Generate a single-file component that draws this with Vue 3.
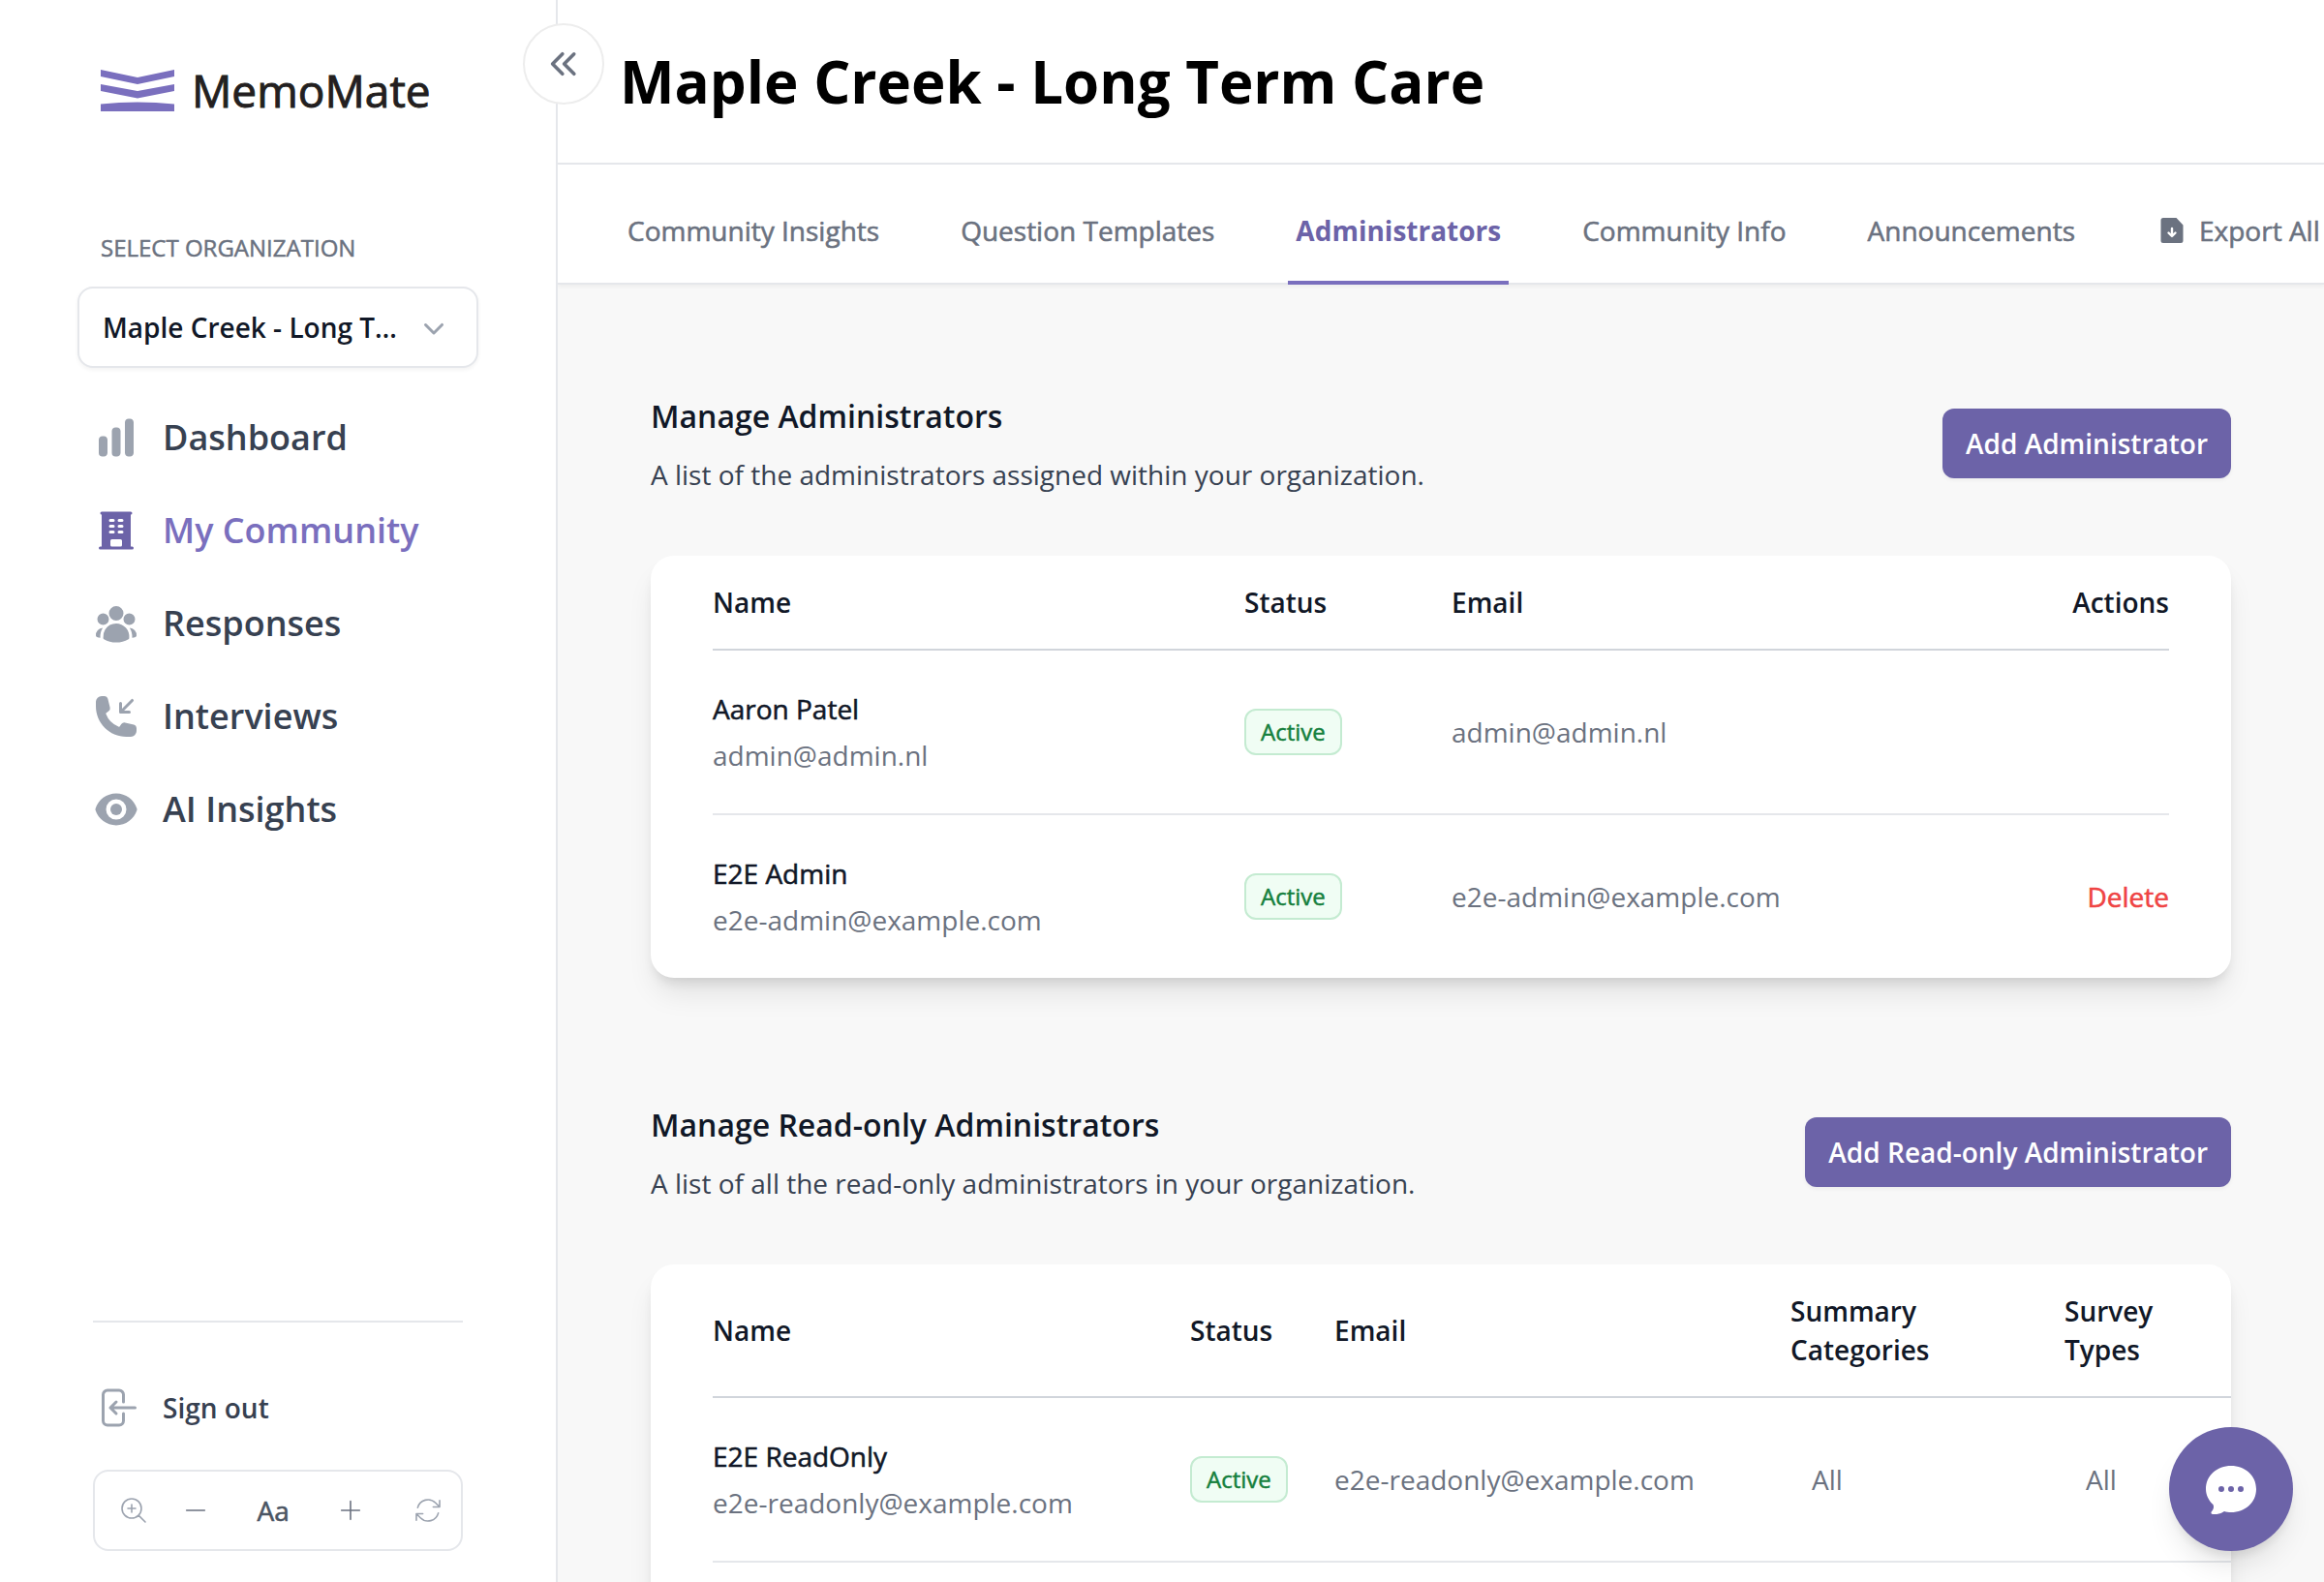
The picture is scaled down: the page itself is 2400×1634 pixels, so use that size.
<script setup>
import { ref } from 'vue'

const organization = ref('maple-creek')

const navItems = [
  {
    label: 'Dashboard',
    paths: [
      'M18.375 2.25c-1.035 0-1.875.84-1.875 1.875v15.75c0 1.035.84 1.875 1.875 1.875h.75c1.035 0 1.875-.84 1.875-1.875V4.125c0-1.036-.84-1.875-1.875-1.875h-.75ZM9.75 8.625c0-1.036.84-1.875 1.875-1.875h.75c1.036 0 1.875.84 1.875 1.875v11.25c0 1.035-.84 1.875-1.875 1.875h-.75a1.875 1.875 0 0 1-1.875-1.875V8.625ZM3 13.125c0-1.036.84-1.875 1.875-1.875h.75c1.036 0 1.875.84 1.875 1.875v6.75c0 1.035-.84 1.875-1.875 1.875h-.75A1.875 1.875 0 0 1 3 19.875v-6.75Z',
    ],
  },
  {
    label: 'My Community',
    active: true,
    paths: [
      'M4.5 2.25a.75.75 0 0 0 0 1.5v16.5h-.75a.75.75 0 0 0 0 1.5h16.5a.75.75 0 0 0 0-1.5h-.75V3.75a.75.75 0 0 0 0-1.5h-15ZM9 6a.75.75 0 0 0 0 1.5h1.5a.75.75 0 0 0 0-1.5H9Zm-.75 3.75A.75.75 0 0 1 9 9h1.5a.75.75 0 0 1 0 1.5H9a.75.75 0 0 1-.75-.75ZM9 12a.75.75 0 0 0 0 1.5h1.5a.75.75 0 0 0 0-1.5H9Zm3.75-5.25A.75.75 0 0 1 13.5 6H15a.75.75 0 0 1 0 1.5h-1.5a.75.75 0 0 1-.75-.75ZM13.5 9a.75.75 0 0 0 0 1.5H15A.75.75 0 0 0 15 9h-1.5Zm-.75 3.75a.75.75 0 0 1 .75-.75H15a.75.75 0 0 1 0 1.5h-1.5a.75.75 0 0 1-.75-.75ZM9 19.5v-2.25a.75.75 0 0 1 .75-.75h4.5a.75.75 0 0 1 .75.75v2.25a.75.75 0 0 1-.75.75h-4.5A.75.75 0 0 1 9 19.5Z',
    ],
  },
  {
    label: 'Responses',
    paths: [
      'M8.25 6.75a3.75 3.75 0 1 1 7.5 0 3.75 3.75 0 0 1-7.5 0ZM15.75 9.75a3 3 0 1 1 6 0 3 3 0 0 1-6 0ZM2.25 9.75a3 3 0 1 1 6 0 3 3 0 0 1-6 0ZM6.31 15.117A6.745 6.745 0 0 1 12 12a6.745 6.745 0 0 1 6.709 7.498.75.75 0 0 1-.372.568A12.696 12.696 0 0 1 12 21.75c-2.305 0-4.47-.612-6.337-1.684a.75.75 0 0 1-.372-.568 6.787 6.787 0 0 1 1.019-4.38Z',
      'M5.082 14.254a8.287 8.287 0 0 0-1.308 5.135 9.687 9.687 0 0 1-1.764-.44l-.115-.04a.563.563 0 0 1-.373-.487l-.01-.121a3.75 3.75 0 0 1 3.57-4.047ZM20.226 19.389a8.287 8.287 0 0 0-1.308-5.135 3.75 3.75 0 0 1 3.57 4.047l-.01.121a.563.563 0 0 1-.373.486l-.115.04c-.567.2-1.156.349-1.764.441Z',
    ],
  },
  {
    label: 'Interviews',
    paths: [
      'M19.5 9.75a.75.75 0 0 1-.75.75h-4.5a.75.75 0 0 1-.75-.75v-4.5a.75.75 0 0 1 1.5 0v2.69l4.72-4.72a.75.75 0 1 1 1.06 1.06L16.06 9h2.69a.75.75 0 0 1 .75.75Z',
      'M1.5 4.5a3 3 0 0 1 3-3h1.372c.86 0 1.61.586 1.819 1.42l1.105 4.423a1.875 1.875 0 0 1-.694 1.955l-1.293.97c-.135.101-.164.249-.126.352a11.285 11.285 0 0 0 6.697 6.697c.103.038.25.009.352-.126l.97-1.293a1.875 1.875 0 0 1 1.955-.694l4.423 1.105c.834.209 1.42.959 1.42 1.82V19.5a3 3 0 0 1-3 3h-2.25C8.552 22.5 1.5 15.448 1.5 6.75V4.5Z',
    ],
  },
  {
    label: 'AI Insights',
    paths: [
      'M12 15a3 3 0 1 0 0-6 3 3 0 0 0 0 6Z',
      'M1.323 11.447C2.811 6.976 7.028 3.75 12.001 3.75c4.97 0 9.185 3.223 10.675 7.69.12.362.12.752 0 1.113-1.487 4.471-5.705 7.697-10.677 7.697-4.97 0-9.186-3.223-10.675-7.69a1.762 1.762 0 0 1 0-1.113ZM17.25 12a5.25 5.25 0 1 1-10.5 0 5.25 5.25 0 0 1 10.5 0Z',
    ],
  },
]

const tabs = [
  { label: 'Community Insights' },
  { label: 'Question Templates' },
  { label: 'Administrators', active: true },
  { label: 'Community Info' },
  { label: 'Announcements' },
  { label: 'Export All', icon: true },
]

const admins = [
  { name: 'Aaron Patel', email: 'admin@admin.nl', status: 'Active', removable: false },
  { name: 'E2E Admin', email: 'e2e-admin@example.com', status: 'Active', removable: true },
]

const readOnlyAdmins = [
  { name: 'E2E ReadOnly', email: 'e2e-readonly@example.com', status: 'Active', categories: 'All', surveys: 'All' },
]
</script>

<template>
  <div class="shell">
    <aside class="sidebar">
      <a href="#" class="brand medium">
        <svg class="brand-mark" viewBox="0 0 76 43" aria-hidden="true">
          <path d="M0 0 38 8 76 0V7L38 15 0 7ZM0 15 38 22 76 15V22L38 29.500 0 22ZM0 35.500Q38 31.500 76 35.500V43H0Z" />
        </svg>
        <span>MemoMate</span>
      </a>

      <label class="org-label medium" for="organization">SELECT ORGANIZATION</label>
      <div class="org-field">
        <select id="organization" v-model="organization" class="org-select">
          <option value="maple-creek">Maple Creek - Long Term Care</option>
        </select>
        <svg class="org-chevron" viewBox="0 0 20 20" aria-hidden="true">
          <path d="M5.22 8.22a.75.75 0 0 1 1.06 0L10 11.94l3.72-3.72a.75.75 0 1 1 1.06 1.06l-4.25 4.25a.75.75 0 0 1-1.06 0L5.22 9.28a.75.75 0 0 1 0-1.06Z" />
        </svg>
      </div>

      <nav class="nav" aria-label="Main">
        <a v-for="item in navItems" :key="item.label" href="#" class="nav-link" :class="{ active: item.active }">
          <svg class="nav-icon" viewBox="0 0 24 24" fill-rule="evenodd" aria-hidden="true">
            <path v-for="d in item.paths" :key="d" :d="d" />
          </svg>
          <span>{{ item.label }}</span>
        </a>
      </nav>

      <div class="sidebar-foot">
        <a href="#" class="sign-out">
          <svg class="line-icon" viewBox="0 0 24 24" aria-hidden="true">
            <path d="M15.75 9V5.25A2.25 2.25 0 0 0 13.5 3h-6a2.25 2.25 0 0 0-2.25 2.25v13.5A2.25 2.25 0 0 0 7.5 21h6a2.25 2.25 0 0 0 2.25-2.25V15M12 9l-3 3m0 0 3 3m-3-3h12.75" />
          </svg>
          <span>Sign out</span>
        </a>

        <div class="text-size medium">
          <svg class="size-icon" viewBox="0 0 24 24" aria-hidden="true">
            <path d="m21 21-5.197-5.197m0 0A7.5 7.5 0 1 0 5.196 5.196a7.5 7.5 0 0 0 10.607 10.607ZM10.500 7.500v6m3-3h-6" />
          </svg>
          <div class="size-controls">
            <button type="button" class="size-button dark" aria-label="Decrease text size">
              <svg class="size-icon" viewBox="0 0 24 24" aria-hidden="true"><path d="M5 12h14" /></svg>
            </button>
            <span>Aa</span>
            <button type="button" class="size-button dark" aria-label="Increase text size">
              <svg class="size-icon" viewBox="0 0 24 24" aria-hidden="true"><path d="M12 5v14m7-7H5" /></svg>
            </button>
            <button type="button" class="size-button" aria-label="Reset text size">
              <svg class="size-icon" viewBox="0 0 24 24" aria-hidden="true">
                <path d="M16.023 9.348h4.992v-.001M2.985 19.644v-4.992m0 0h4.992m-4.993 0 3.181 3.183a8.250 8.250 0 0 0 13.803-3.700M4.031 9.865a8.250 8.250 0 0 1 13.803-3.700l3.181 3.182m0-4.991v4.990" />
              </svg>
            </button>
          </div>
        </div>
      </div>

      <button type="button" class="collapse" aria-label="Collapse sidebar">
        <svg viewBox="0 0 20 20" aria-hidden="true">
          <path d="M4.720 9.470a.75.75 0 0 0 0 1.060l4.250 4.250a.75.75 0 1 0 1.060-1.060L6.310 10l3.720-3.720a.75.75 0 1 0-1.060-1.060L4.720 9.470Zm9.250-4.250L9.720 9.470a.75.75 0 0 0 0 1.060l4.250 4.250a.75.75 0 1 0 1.060-1.060L11.310 10l3.720-3.720a.75.75 0 0 0-1.060-1.060Z" />
        </svg>
      </button>
    </aside>

    <div class="page">
      <header class="page-header">
        <h1>Maple Creek - Long Term Care</h1>
      </header>

      <nav class="tabs" aria-label="Community">
        <a v-for="tab in tabs" :key="tab.label" href="#" class="tab" :class="tab.active ? 'active' : 'medium'">
          <svg v-if="tab.icon" class="tab-icon" viewBox="0 0 32 32" aria-hidden="true">
            <path d="M7 3H20.500L27.500 10.500V26.500A2.500 2.500 0 0 1 25 29H7A2.500 2.500 0 0 1 4.500 26.500V5.500A2.500 2.500 0 0 1 7 3Z" />
            <path class="tab-arrow" d="M16 14V21.800M12.500 18.500 16 22 19.500 18.500" />
          </svg>
          <span>{{ tab.label }}</span>
        </a>
      </nav>

      <main class="content">
        <section class="section">
          <div class="section-head">
            <div>
              <h2>Manage Administrators</h2>
              <p>A list of the administrators assigned within your organization.</p>
            </div>
            <button type="button" class="primary">Add Administrator</button>
          </div>
          <div class="card">
            <table class="data">
              <colgroup>
                <col class="admin-name" />
                <col class="admin-status" />
                <col />
                <col class="admin-actions" />
              </colgroup>
              <thead>
                <tr>
                  <th scope="col">Name</th>
                  <th scope="col">Status</th>
                  <th scope="col">Email</th>
                  <th scope="col" class="actions">Actions</th>
                </tr>
              </thead>
              <tbody>
                <tr v-for="admin in admins" :key="admin.email">
                  <td>
                    <div class="person medium">{{ admin.name }}</div>
                    <div class="person-email">{{ admin.email }}</div>
                  </td>
                  <td><span class="badge medium">{{ admin.status }}</span></td>
                  <td>{{ admin.email }}</td>
                  <td class="actions">
                    <button v-if="admin.removable" type="button" class="delete medium">Delete</button>
                  </td>
                </tr>
              </tbody>
            </table>
          </div>
        </section>

        <section class="section">
          <div class="section-head">
            <div>
              <h2>Manage Read-only Administrators</h2>
              <p>A list of all the read-only administrators in your organization.</p>
            </div>
            <button type="button" class="primary">Add Read-only Administrator</button>
          </div>
          <div class="card">
            <table class="data wide">
              <colgroup>
                <col class="reader-name" />
                <col class="reader-status" />
                <col class="reader-email" />
                <col class="reader-scope" />
                <col />
              </colgroup>
              <thead>
                <tr>
                  <th scope="col">Name</th>
                  <th scope="col">Status</th>
                  <th scope="col">Email</th>
                  <th scope="col">Summary<br />Categories</th>
                  <th scope="col">Survey<br />Types</th>
                </tr>
              </thead>
              <tbody>
                <tr v-for="admin in readOnlyAdmins" :key="admin.email">
                  <td>
                    <div class="person medium">{{ admin.name }}</div>
                    <div class="person-email">{{ admin.email }}</div>
                  </td>
                  <td><span class="badge medium">{{ admin.status }}</span></td>
                  <td>{{ admin.email }}</td>
                  <td class="scope">{{ admin.categories }}</td>
                  <td class="scope">{{ admin.surveys }}</td>
                </tr>
              </tbody>
            </table>
          </div>
        </section>
      </main>
    </div>

    <button type="button" class="chat" aria-label="Open chat">
      <svg viewBox="0 0 52 52" aria-hidden="true">
        <path fill-rule="evenodd" d="M26 2C40.500 2 52 12 52 26S40.500 50 26 50C23.500 50 21 49.700 19 49C16 51.500 11 52.500 7 52C5 51.500 5 50 6.500 48.500C8 46.500 8.500 44.500 7.500 42C3 38 0 32 0 26C0 12 11.500 2 26 2ZM16 23a3 3 0 1 0 0 6 3 3 0 0 0 0-6ZM26 23a3 3 0 1 0 0 6 3 3 0 0 0 0-6ZM36 23a3 3 0 1 0 0 6 3 3 0 0 0 0-6Z" />
      </svg>
    </button>
  </div>
</template>

<style>
body {
  margin: 0;
}
</style>

<style scoped>
.shell,
.shell * {
  box-sizing: border-box;
}

.shell {
  display: flex;
  height: 100vh;
  overflow: hidden;
  background: #f8f8f8;
  color: #111827;
  font-family: "Open Sans", "Noto Sans", sans-serif;
  font-size: 28px;
  line-height: 40px;
}

a {
  color: inherit;
  text-decoration: none;
}

button,
select {
  margin: 0;
  padding: 0;
  border: 0;
  background: none;
  color: inherit;
  font: inherit;
  cursor: pointer;
}

svg {
  display: block;
  flex: none;
  fill: currentColor;
}

h1,
h2,
p {
  margin: 0;
}

/* Thickens the regular cut where the family has no medium one */
.medium {
  font-weight: 500;
  -webkit-text-stroke: 0.02em currentColor;
}

.sidebar {
  position: relative;
  z-index: 1;
  display: flex;
  flex: none;
  flex-direction: column;
  width: 576px;
  padding: 62px 80px 32px;
  border-right: 2px solid #e5e7eb;
  background: #fff;
}

.brand {
  display: flex;
  align-items: center;
  gap: 18px;
  height: 62px;
  padding-left: 24px;
  color: #231f20;
  font-size: 46px;
}

.brand-mark {
  width: 76px;
  height: 43px;
  color: #7a6fbe;
}

.org-label {
  margin-top: 112px;
  padding-left: 24px;
  color: #6b7280;
  font-size: 24px;
}

.org-field {
  position: relative;
  margin-top: 20px;
}

.org-select {
  display: block;
  width: 100%;
  height: 84px;
  padding: 0 80px 0 24px;
  overflow: hidden;
  border: 2px solid #e5e7eb;
  border-radius: 16px;
  background: #fff;
  box-shadow: 0 2px 4px rgba(0, 0, 0, 0.05);
  font-weight: 600;
  text-overflow: ellipsis;
  white-space: nowrap;
  appearance: none;
}

.org-chevron {
  position: absolute;
  top: 22px;
  right: 26px;
  width: 40px;
  height: 40px;
  color: #9ca3af;
  pointer-events: none;
}

.nav {
  display: flex;
  flex-direction: column;
  margin-top: 24px;
}

.nav-link {
  display: flex;
  align-items: center;
  gap: 24px;
  height: 96px;
  padding-left: 16px;
  color: #374151;
  font-size: 36px;
  font-weight: 600;
}

.nav-icon {
  width: 48px;
  height: 48px;
  color: #9ca3af;
}

.nav-link.active {
  color: #7a6fbe;
}

.nav-link.active .nav-icon {
  color: #6c63a8;
}

.sidebar-foot {
  margin: auto 16px 0;
  border-top: 2px solid #e5e7eb;
}

.sign-out {
  display: flex;
  align-items: center;
  gap: 24px;
  margin: 64px 0 40px;
  color: #374151;
  font-weight: 600;
}

.line-icon {
  width: 48px;
  height: 48px;
  fill: none;
  stroke: #9ca3af;
  stroke-width: 1.5;
  stroke-linecap: round;
  stroke-linejoin: round;
}

.text-size {
  display: flex;
  align-items: center;
  gap: 32px;
  height: 84px;
  padding: 0 18px 0 24px;
  border: 2px solid #e5e7eb;
  border-radius: 16px;
  color: #4b5563;
}

.size-controls {
  display: flex;
  flex: 1;
  align-items: center;
  justify-content: space-between;
}

.size-icon {
  width: 32px;
  height: 32px;
  fill: none;
  stroke: #9ca3af;
  stroke-width: 1.2;
  stroke-linecap: round;
  stroke-linejoin: round;
}

.dark .size-icon {
  stroke: #6b7280;
}

.collapse {
  position: absolute;
  top: 24px;
  right: -50px;
  display: flex;
  align-items: center;
  justify-content: center;
  width: 84px;
  height: 84px;
  border: 2px solid #ededed;
  border-radius: 50%;
  background: #fff;
  color: #6b7280;
}

.collapse svg {
  width: 48px;
  height: 48px;
}

.page {
  display: flex;
  flex: 1;
  flex-direction: column;
  min-width: 0;
}

.page-header {
  display: flex;
  flex: none;
  align-items: center;
  height: 170px;
  padding: 0 64px;
  border-bottom: 2px solid #e5e7eb;
  background: #fff;
  color: #000;
}

h1 {
  font-size: 60px;
  font-weight: 700;
  line-height: 72px;
}

.tabs {
  display: flex;
  flex: none;
  gap: 68px;
  height: 124px;
  padding: 0 64px;
  border-bottom: 2px solid #e5e7eb;
  background: #fff;
  box-shadow: 0 2px 4px rgba(0, 0, 0, 0.05);
}

.tab {
  display: flex;
  flex: none;
  align-items: center;
  gap: 12px;
  height: 124px;
  padding: 16px 8px 0;
  border-bottom: 4px solid transparent;
  color: #6b7280;
}

.tab.active {
  border-color: #7a6fbe;
  color: #6c63a8;
  font-weight: 700;
}

.tab-icon {
  width: 32px;
  height: 32px;
}

.tab-arrow {
  fill: none;
  stroke: #fff;
  stroke-width: 2.4;
  stroke-linecap: round;
  stroke-linejoin: round;
}

.content {
  display: flex;
  flex: 1;
  flex-direction: column;
  gap: 128px;
  min-height: 0;
  padding: 112px 96px 96px;
  overflow-y: auto;
  scrollbar-width: none;
}

.section {
  flex: none;
}

.section-head {
  display: flex;
  align-items: center;
  justify-content: space-between;
  margin-bottom: 64px;
}

h2 {
  margin-bottom: 16px;
  font-size: 32px;
  font-weight: 600;
  line-height: 48px;
}

.section-head p {
  color: #374151;
}

.primary {
  height: 72px;
  padding: 0 24px;
  border-radius: 12px;
  background: #6c63a8;
  box-shadow: 0 2px 4px rgba(0, 0, 0, 0.05);
  color: #fff;
  font-weight: 600;
}

.card {
  padding: 0 64px;
  overflow: hidden;
  border-radius: 24px;
  background: #fff;
  box-shadow: 0 20px 30px -6px rgba(0, 0, 0, 0.1), 0 8px 12px -4px rgba(0, 0, 0, 0.1);
}

.data {
  width: 100%;
  border-spacing: 0;
  table-layout: fixed;
  color: #6b7280;
}

.data.wide {
  width: 125%;
  margin-bottom: 64px;
}

.admin-name {
  width: 525px;
}

.admin-status {
  width: 214px;
}

.admin-actions {
  width: 240px;
}

.reader-name {
  width: 469px;
}

.reader-status {
  width: 149px;
}

.reader-email {
  width: 471px;
}

.reader-scope {
  width: 283px;
}

th,
td {
  text-align: left;
  vertical-align: middle;
}

th {
  padding: 28px 24px;
  border-bottom: 2px solid #d1d5db;
  color: #111827;
  font-weight: 600;
}

td {
  padding: 40px 24px;
  border-bottom: 2px solid #e5e7eb;
}

.data:not(.wide) tbody tr:last-child td {
  border-bottom: 0;
}

th:first-child,
td:first-child {
  padding-left: 0;
}

.actions {
  padding-right: 0;
  text-align: right;
}

td.scope {
  padding-left: 46px;
}

.person {
  margin-bottom: 8px;
  color: #111827;
}

.badge {
  display: inline-block;
  padding: 6px 15px;
  border: 2px solid #c4ebd1;
  border-radius: 12px;
  background: #f0fdf4;
  color: #15803d;
  font-size: 24px;
  line-height: 32px;
  vertical-align: middle;
}

.delete {
  color: #ef4444;
}

.chat {
  position: fixed;
  right: 32px;
  bottom: 32px;
  z-index: 2;
  display: flex;
  align-items: center;
  justify-content: center;
  width: 128px;
  height: 128px;
  border-radius: 50%;
  background: #6c63a8;
  box-shadow: 0 20px 30px -6px rgba(0, 0, 0, 0.1), 0 8px 12px -4px rgba(0, 0, 0, 0.1);
  color: #fff;
}

.chat svg {
  width: 52px;
  height: 52px;
}
</style>
